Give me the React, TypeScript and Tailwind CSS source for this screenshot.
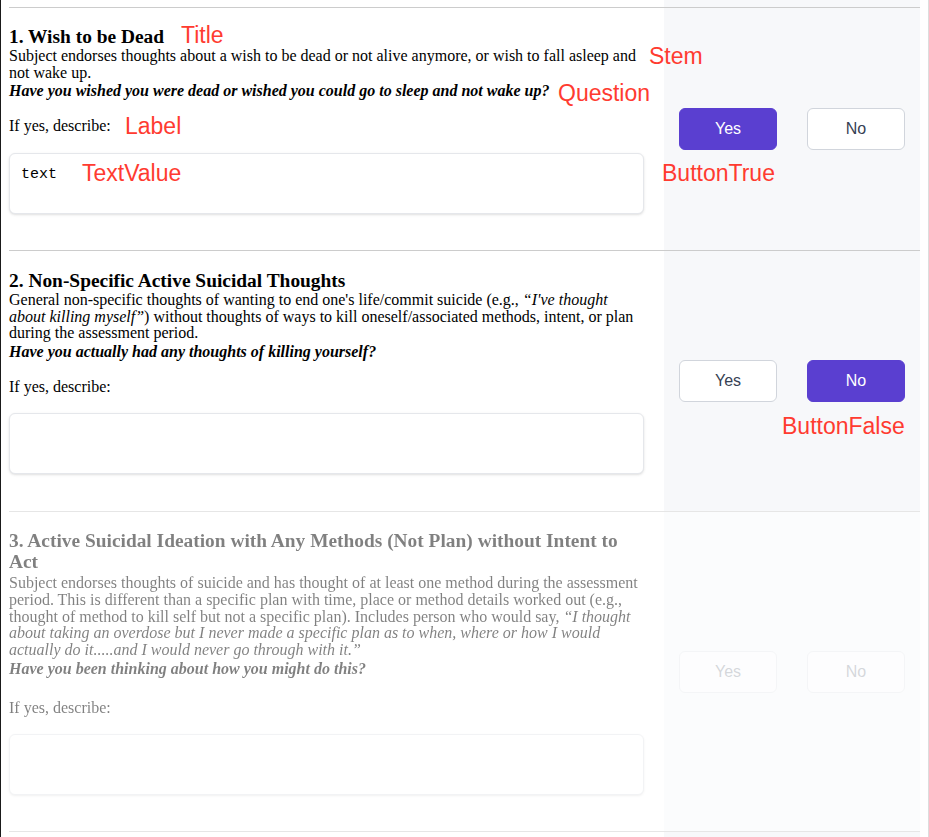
import React from "react";

type Item = {
  n: number;
  title: string;
  stem: React.ReactNode;
  question: string;
  value: string;
  answer: "yes" | "no" | null;
  disabled?: boolean;
  pad: string;
  stemGap: string;
  labelGap: string;
};

const items: Item[] = [
  {
    n: 1,
    title: "Wish to be Dead",
    stem: (
      <>
        Subject endorses thoughts about a wish to be dead or not alive anymore, or wish to fall asleep and not wake up.
      </>
    ),
    question: "Have you wished you were dead or wished you could go to sleep and not wake up?",
    value: "text",
    answer: "yes",
    pad: "pt-[18px] pb-[36px]",
    stemGap: "mt-px",
    labelGap: "mt-[18px]",
  },
  {
    n: 2,
    title: "Non-Specific Active Suicidal Thoughts",
    stem: (
      <>
        General non-specific thoughts of wanting to end one's life/commit suicide (e.g.,{" "}
        <i>“I've thought about killing myself”</i>) without thoughts of ways to kill oneself/associated methods,
        intent, or plan during the assessment period.
      </>
    ),
    question: "Have you actually had any thoughts of killing yourself?",
    value: "",
    answer: "no",
    pad: "pt-[19px] pb-[37px]",
    stemGap: "mt-px",
    labelGap: "mt-[18px]",
  },
  {
    n: 3,
    title: "Active Suicidal Ideation with Any Methods (Not Plan) without Intent to Act",
    stem: (
      <>
        Subject endorses thoughts of suicide and has thought of at least one method during the assessment period.
        This is different than a specific plan with time, place or method details worked out (e.g., thought of
        method to kill self but not a specific plan). Includes person who would say,{" "}
        <i>
          “I thought about taking an overdose but I never made a specific plan as to when, where or how I would
          actually do it.....and I would never go through with it.”
        </i>
      </>
    ),
    question: "Have you been thinking about how you might do this?",
    value: "",
    answer: null,
    disabled: true,
    pad: "pt-[18px] pb-[36px]",
    stemGap: "mt-[3px]",
    labelGap: "mt-[22px]",
  },
];

function Choice({ label, on, disabled }: { label: string; on: boolean; disabled?: boolean }) {
  return (
    <button
      disabled={disabled}
      className={`h-[42px] w-[98px] rounded-md border font-['Liberation_Sans',sans-serif] text-[16px] ${
        on
          ? "border-[#5a3fd0] bg-[#5a3fd0] text-white"
          : "border-gray-300 bg-white text-gray-700"
      } ${disabled ? "opacity-40" : ""}`}
    >
      {label}
    </button>
  );
}

function Row({ item }: { item: Item }) {
  return (
    <div
      className={`flex border-t border-[#cccccc] ${item.disabled ? "border-b opacity-50" : ""}`}
    >
      <div className={`min-w-0 flex-1 pr-5 ${item.pad}`}>
        <h3 className="text-[19.4px] font-bold leading-[21px]">
          {item.n}. {item.title}
        </h3>
        <p className={`text-[16px] leading-[16.7px] ${item.stemGap}`}>{item.stem}</p>
        <p className="mt-[2px] text-[16px] font-bold italic leading-[16.7px]">{item.question}</p>
        <div className={`text-[16px] leading-[16.7px] ${item.labelGap}`}>If yes, describe:</div>
        <textarea
          readOnly
          disabled={item.disabled}
          defaultValue={item.value}
          className="mt-[18px] block h-[61px] w-full resize-none rounded-md border border-gray-200 bg-white px-[11px] py-[10px] font-['Liberation_Mono',monospace] text-[15px] text-black shadow-sm outline-none"
        />
      </div>
      <div className="flex w-[256px] shrink-0 items-center justify-center gap-[30px] bg-[#f7f8fa]">
        <Choice label="Yes" on={item.answer === "yes"} disabled={item.disabled} />
        <Choice label="No" on={item.answer === "no"} disabled={item.disabled} />
      </div>
    </div>
  );
}

function Note({ text, className }: { text: string; className: string }) {
  return (
    <span
      className={`pointer-events-none absolute font-['Liberation_Sans',sans-serif] text-[23px] leading-none text-[#ff3b30] ${className}`}
    >
      {text}
    </span>
  );
}

export default function App() {
  return (
    <div className="relative min-h-[837px] border-l border-r border-l-[#1a1a1a] border-r-[#dddddd] px-2 font-['Liberation_Serif',serif] text-black">
      {/* tail of the previous question */}
      <div className="flex h-[7px]">
        <div className="flex-1" />
        <div className="w-[256px] bg-[#f7f8fa]" />
      </div>

      {items.map((it) => (
        <Row key={it.n} item={it} />
      ))}

      <div className="flex h-[12px]">
        <div className="flex-1" />
        <div className="w-[256px] bg-[#f7f8fa]" />
      </div>

      {/* field annotations */}
      <Note text="Title" className="left-[180px] top-[24px]" />
      <Note text="Stem" className="left-[648px] top-[45px]" />
      <Note text="Question" className="left-[557px] top-[82px]" />
      <Note text="Label" className="left-[124px] top-[115px]" />
      <Note text="TextValue" className="left-[81px] top-[162px]" />
      <Note text="ButtonTrue" className="left-[661px] top-[162px]" />
      <Note text="ButtonFalse" className="left-[781px] top-[415px]" />
    </div>
  );
}
